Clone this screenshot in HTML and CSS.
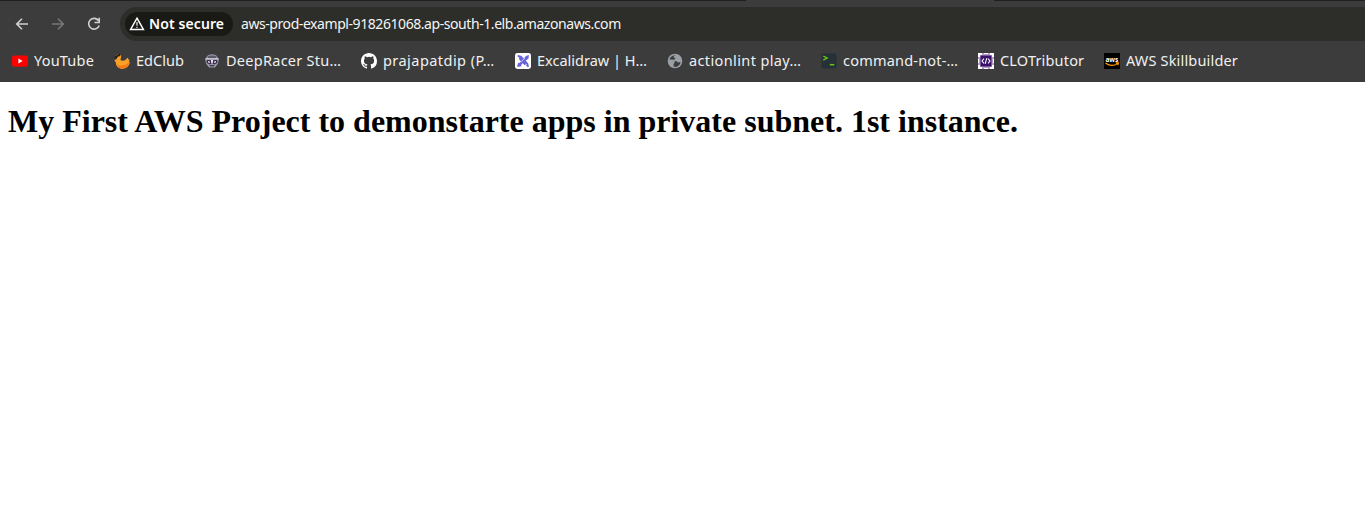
FILE: index.html
```html
<!DOCTYPE html>
<html lang="en">
<head>
<meta charset="utf-8">
<title>aws-prod-exampl</title>
<link rel="stylesheet" href="styles.css">
</head>
<body>
<header class="browser">
  <div class="tabstrip"><span class="strip-left"></span><span class="strip-right"></span></div>
  <div class="toolbar">
    <nav class="controls">
      <svg class="control" viewBox="0 0 16 16"><path d="M14 8H3M8 2.7L2.7 8 8 13.3"/></svg>
      <svg class="control muted" viewBox="0 0 16 16"><path d="M2 8h11M8 2.7L13.3 8 8 13.3"/></svg>
      <svg class="control" viewBox="0 0 16 16"><path d="M12.6 4.8A5.4 5.4 0 1 0 13.2 9.4M13.2 1.8v4.7H8.5"/></svg>
    </nav>
    <div class="address">
      <div class="chip">
        <svg class="warning" viewBox="0 0 16 16"><path d="M8 2.2L14.4 13.4H1.6Z" fill="none" stroke="#fff" stroke-width="1.5"/><path d="M8 6v3.8M8 10.7v1.4" stroke="#ddd" stroke-width="1.3"/></svg>
        <span class="chip-label">Not secure</span>
      </div>
      <span class="url">aws-prod-exampl-918261068.ap-south-1.elb.amazonaws.com</span>
    </div>
  </div>
  <nav class="bookmarks">
    <a class="bookmark youtube"><svg class="icon" viewBox="0 0 16 16"><rect y="2.4" width="16" height="11.3" rx="2.6" fill="#f00"/><path d="M6.4 5.6v4.8L10.6 8z" fill="#fff"/></svg><span class="label">YouTube</span></a>
    <a class="bookmark edclub"><svg class="icon" viewBox="0 0 16 16"><path d="M2 3.2C3 .8 6.4.5 7 3.2c.4 1.7-.8 2.6-.4 3.8.9 1.2 3.6 1 5.2-.4L14 4.4l.3 2 1.7.3-1.2 1.5 1 1.3C15 13.3 12.2 15.7 8.6 15.7 4.5 15.7 1.6 13 1.8 9.2L.2 7.4 2.7 6z" fill="#fba026"/><path d="M2.6 11c3 2.6 8.5 2 12.4-1.4-.6 3.9-3.4 6.1-6.4 6.1-2.8 0-5-1.7-6-4.7z" fill="#f47a1b"/><path d="M0 4.8L2.5 2.4 5.4.4l1 1.4-1 1.6H3.9L2.8 5.6z" fill="#211d1b"/></svg><span class="label">EdClub</span></a>
    <a class="bookmark deepracer"><svg class="icon" viewBox="0 0 16 16"><path d="M2.6 4C4 .3 12 .3 13.4 4l1.5 2.2-1 4.6-3 3.7H5.1l-3-3.7-1-4.6z" fill="#9a99a8"/><path d="M3.4 3.6Q8 1.2 12.6 3.6L12 5.2H4z" fill="#5d5868"/><path d="M1.5 5.8h13" stroke="#d8d7df" stroke-width="1"/><path d="M2.7 6.9h10.6v3.2L10 11.4 8 9.8l-2 1.6-3.3-1.3z" fill="#3d2a50"/><path d="M4 8l2.2.7-.4 1-1.8-.3zm8 0l-2.2.7.4 1 1.8-.3zM6.9 6.9h2.2l-.4 3H7.3z" fill="#eee"/><path d="M5.2 12h5.6l-1.2 1.5H6.4z" fill="#4a3b59"/></svg><span class="label">DeepRacer Stu…</span></a>
    <a class="bookmark github"><svg class="icon" viewBox="0 0 16 16"><path fill="#fff" d="M8 0C3.58 0 0 3.58 0 8c0 3.54 2.29 6.53 5.47 7.59.4.07.55-.17.55-.38 0-.19-.01-.82-.01-1.49-2.01.37-2.53-.49-2.69-.94-.09-.23-.48-.94-.82-1.13-.28-.15-.68-.52-.01-.53.63-.01 1.08.58 1.23.82.72 1.21 1.87.87 2.33.66.07-.52.28-.87.51-1.07-1.78-.2-3.64-.89-3.64-3.95 0-.87.31-1.59.82-2.15-.08-.2-.36-1.02.08-2.12 0 0 .67-.21 2.2.82a7.6 7.6 0 0 1 4 0c1.53-1.04 2.2-.82 2.2-.82.44 1.1.16 1.92.08 2.12.51.56.82 1.27.82 2.15 0 3.07-1.87 3.75-3.65 3.95.29.25.54.73.54 1.48 0 1.07-.01 1.93-.01 2.2 0 .21.15.46.55.38A8.01 8.01 0 0 0 16 8c0-4.42-3.58-8-8-8z"/></svg><span class="label">prajapatdip (P…</span></a>
    <a class="bookmark excalidraw"><svg class="icon" viewBox="0 0 16 16"><rect width="16" height="16" rx="2.4" fill="#fff"/><path d="M2.2 3l1-1 3.4 1 6.5 7.3.9 3.3-1.2.7-2.1-2.4-1.3.2-5.3-5.7.2-1.3z" fill="#6965db"/><path d="M13.8 2.1l-.2 3.1-7 6-.5 2-3.2.7-.8-1 1-3 1.7-.2 6.2-6.8z" fill="#6965db"/><path d="M6.3 8.7L9.8 5" stroke="#fff" stroke-width=".7"/><circle cx="11" cy="11.5" r=".6" fill="#fff"/></svg><span class="label">Excalidraw | H…</span></a>
    <a class="bookmark actionlint"><svg class="icon" viewBox="0 0 16 16"><circle cx="8" cy="8" r="7.3" fill="#9aa0a6"/><path d="M9 2.2C6.6 2.4 5.8 4.2 7.6 4.7l.9 1.3-1.9.7-.2 1.3 3.3.2 1.2 1.3 2.8-.5C13 12 10.9 13.8 8.6 13.9l-2-.4V11l1.2-1.2L6.2 8.3 2.3 7.6C2.7 4.2 5.4 2 9 2.2z" fill="#3c3c3c"/><path d="M2 7.2h3.6l1.8 1.6" fill="none" stroke="#9aa0a6" stroke-width="1.6"/></svg><span class="label">actionlint play…</span></a>
    <a class="bookmark command"><svg class="icon" viewBox="0 0 16 16"><rect x=".5" y=".5" width="15" height="15" rx="1.5" fill="#263037"/><path d="M2.3 3l3.8 2.1-3.8 2" fill="none" stroke="#65c815" stroke-width="1.4"/><path d="M8.8 11.7h4.5" stroke="#65c815" stroke-width="1.5"/></svg><span class="label">command-not-…</span></a>
    <a class="bookmark clotributor"><svg class="icon" viewBox="0 0 16 16"><path d="M0 0h16v16H0z" fill="#b4a0c9"/><path d="M0 0h4v2H2v2H0zm12 0h4v4h-2V2h-2zM0 12h2v2h2v2H0zm14 0h2v4h-4v-2h2zM6 0h4v1H6zM6 15h4v1H6zM0 6h1v4H0zm15 0h1v4h-1z" fill="#fff"/><path d="M2.5 2.5h11v11h-11z" fill="#38106b"/><path d="M6 5.7L4 8 6 10.3M10 5.7L12 8 10 10.3M8.8 5.2L7.2 10.8" fill="none" stroke="#fff" stroke-width="1.1"/></svg><span class="label">CLOTributor</span></a>
    <a class="bookmark aws"><svg class="icon" viewBox="0 0 16 16"><path d="M0 0h16v16H0z" fill="#000"/><text x="1.4" y="8.8" class="aws-mark" textLength="13" lengthAdjust="spacingAndGlyphs">aws</text><path d="M1.5 10c3.3 3 8.5 3.2 12 .6M11.7 9.9l2.9-.1-.8 2.4" fill="none" stroke="#f90" stroke-width="1.15"/></svg><span class="label">AWS Skillbuilder</span></a>
  </nav>
</header>
<main class="page"><h1 class="headline">My First AWS Project to demonstarte apps in private subnet. 1st instance.</h1></main>
</body>
</html>
```
FILE: styles.css
```css
body { margin: 0; background: #fff; color: #000; font-family: "Liberation Serif", serif; }
.browser { height: 82px; background: #3c3c3c; color: #f0f0f0; font-family: "Noto Sans", sans-serif; overflow: hidden; }
.tabstrip { height: 1px; display: flex; justify-content: space-between; }
.strip-left { width: 746px; background: #202020; }
.strip-right { width: 371px; background: #202020; }
.toolbar { height: 46px; display: flex; align-items: center; }
.controls { width: 120px; box-sizing: border-box; padding-left: 14px; display: flex; gap: 20px; }
.control { width: 16px; height: 16px; fill: none; stroke: #d0d0d0; stroke-width: 1.6; }
.muted { stroke: #777; }
.address { flex: 1; height: 34px; box-sizing: border-box; padding-left: 5px; display: flex; align-items: center; gap: 8px; border-radius: 17px 0 0 17px; background: #2d2e29; }
.chip { width: 108px; height: 24px; box-sizing: border-box; padding-left: 4px; display: flex; align-items: center; gap: 4px; border-radius: 12px; background: #191a16; white-space: nowrap; }
.warning { width: 16px; height: 16px; flex: none; }
.chip-label { color: #fff; font-size: 14px; font-weight: 600; line-height: 20px; letter-spacing: .1px; }
.url { color: #f5f5f5; font-size: 14px; line-height: 20px; white-space: nowrap; letter-spacing: -.43px; }
.bookmarks { height: 28px; padding-left: 12px; display: flex; align-items: center; gap: 20px; }
.bookmark { display: flex; flex: none; align-items: center; gap: 6px; white-space: nowrap; }
.icon { width: 16px; height: 16px; flex: none; }
.label { height: 20px; margin-bottom: 2px; font-size: 14.5px; line-height: 20px; }
.youtube { width: 82px; letter-spacing: .2px; }
.edclub { width: 70px; letter-spacing: .05px; }
.deepracer { width: 137px; letter-spacing: .27px; }
.github { width: 134px; letter-spacing: .45px; }
.excalidraw { width: 132px; }
.actionlint { width: 134px; letter-spacing: .38px; }
.command { width: 137px; letter-spacing: .2px; }
.clotributor { width: 106px; letter-spacing: .18px; }
.aws { width: 134px; letter-spacing: .17px; }
.aws-mark { fill: #fff; font: bold 7.5px "Noto Sans", sans-serif; letter-spacing: 0; }
.page { display: flow-root; padding: 0 8px; }
.headline { margin: 21px 0; font-size: 32px; font-weight: bold; line-height: 37px; }
```
